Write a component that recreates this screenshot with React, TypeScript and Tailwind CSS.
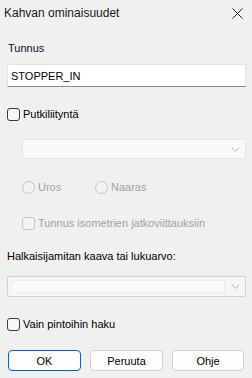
import React from 'react';

function Check({ label, disabled, className = '' }: { label: string; disabled?: boolean; className?: string }) {
  return (
    <div className={`flex items-center h-[16px] ${className}`}>
      <span
        className={`shrink-0 w-[13px] h-[13px] rounded-[3px] border ${
          disabled ? 'border-[#c4c4c4] bg-[#f3f3f3]' : 'border-[#3b3b3b] bg-[#f6f6f6]'
        }`}
      />
      <span className={`ml-[3px] ${disabled ? 'text-[#a2a2a2]' : 'text-[#000]'}`}>{label}</span>
    </div>
  );
}

function Radio({ label, className = '' }: { label: string; className?: string }) {
  return (
    <div className={`flex items-center h-[16px] ${className}`}>
      <span className="shrink-0 w-[13px] h-[13px] rounded-full border border-[#c4c4c4] bg-[#f3f3f3]" />
      <span className="ml-[3px] text-[#a2a2a2]">{label}</span>
    </div>
  );
}

function Chevron({ color }: { color: string }) {
  return (
    <svg width="9" height="5" viewBox="0 0 9 5" fill="none">
      <path d="M0.5 0.5 L4.5 4.5 L8.5 0.5" stroke={color} strokeWidth="1" />
    </svg>
  );
}

export default function App() {
  return (
    <div className="w-[252px] h-[378px] bg-[#f0f0f0] text-[11px] leading-[16px] text-black overflow-hidden font-['Liberation_Sans',Arial,sans-serif]">
      {/* title bar */}
      <div className="h-[26px] flex items-center justify-between pl-[4px] pr-[9px]">
        <span className="text-[12px] text-[#1a1a1a]">Kahvan ominaisuudet</span>
        <svg width="11" height="11" viewBox="0 0 11 11" fill="none">
          <path d="M0.5 0.5 L10.5 10.5 M10.5 0.5 L0.5 10.5" stroke="#222" strokeWidth="1" />
        </svg>
      </div>

      <div className="flex flex-col pl-[7px] pr-[6px]">
        <div className="mt-[14px] ml-[1px] text-[#1a0a2a]">Tunnus</div>
        <div className="mt-[8px] h-[23px] bg-white border border-[#e4e4e4] border-b-[#8a8a8a] flex items-center px-[3px]">
          STOPPER_IN
        </div>

        <Check label="Putkiliityntä" className="mt-[19px]" />

        <div className="mt-[17px] ml-[15px] h-[20px] bg-[#fafafa] border border-[#e6e6e6] rounded-[2px] flex items-center justify-end pr-[5px]">
          <Chevron color="#b8b8b8" />
        </div>

        <div className="mt-[20px] ml-[15px] flex">
          <Radio label="Uros" className="w-[73px]" />
          <Radio label="Naaras" />
        </div>

        <Check label="Tunnus isometrien jatkoviittauksiin" disabled className="mt-[20px] ml-[15px]" />

        <div className="mt-[17px]">Halkaisijamitan kaava tai lukuarvo:</div>

        <div className="mt-[12px] h-[21px] bg-[#f6f6f6] border border-[#cfcfcf] rounded-[2px] flex items-center pl-[3px] pr-[5px]">
          <div className="flex-1 h-[13px] bg-[#fbfbfb] border border-[#ececec]" />
          <div className="ml-[6px]">
            <Chevron color="#b0b0b0" />
          </div>
        </div>

        <Check label="Vain pintoihin haku" className="mt-[19px]" />

        <div className="mt-[18px] flex gap-[9px] pl-[1px]">
          <button className="w-[73px] h-[21px] bg-[#fdfdfd] border border-[#0067c0] rounded-[4px]">OK</button>
          <button className="w-[73px] h-[21px] bg-[#fdfdfd] border border-[#d0d0d0] rounded-[4px]">Peruuta</button>
          <button className="w-[72px] h-[21px] bg-[#fdfdfd] border border-[#d0d0d0] rounded-[4px]">Ohje</button>
        </div>
      </div>
    </div>
  );
}
